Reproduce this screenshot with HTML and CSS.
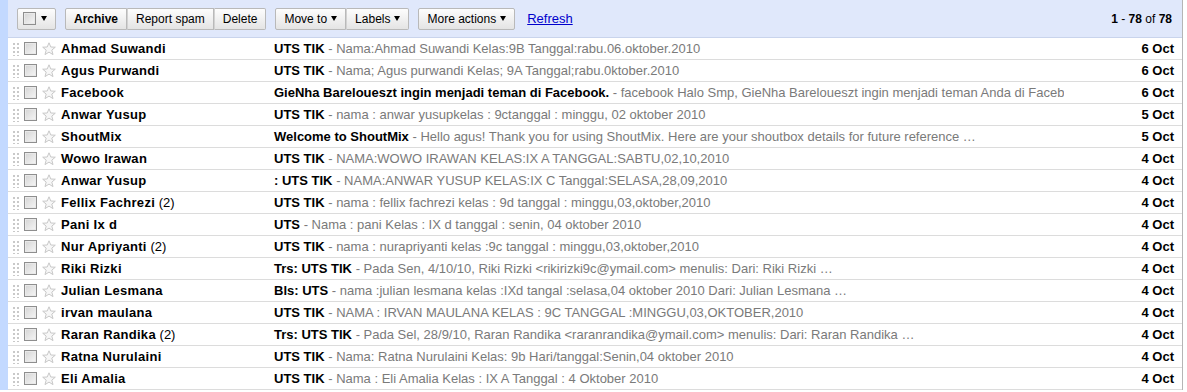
FILE: index.html
```html
<!DOCTYPE html>
<html lang="en">
<head>
    <meta charset="UTF-8">
    <title>Inbox</title>
    <link rel="stylesheet" href="styles.css">
</head>
<body>
    <div class="mailbox">
        <!-- Toolbar -->
        <div class="toolbar">
            <div class="btn select-btn"><span class="cb"></span><span class="arrow"></span></div>
            <div class="group">
                <div class="btn first"><b>Archive</b></div>
                <div class="btn mid">Report spam</div>
                <div class="btn last">Delete</div>
            </div>
            <div class="group">
                <div class="btn first">Move to <span class="arrow"></span></div>
                <div class="btn last">Labels <span class="arrow"></span></div>
            </div>
            <div class="btn">More actions <span class="arrow"></span></div>
            <a class="refresh" href="#refresh">Refresh</a>
            <div class="count"><b>1</b> - <b>78</b> of <b>78</b></div>
        </div>

        <!-- Message list -->
        <div class="list" id="list"></div>
    </div>

    <script>
        const mails = [
            ['Ahmad Suwandi', '', 'UTS TIK', 'Nama:Ahmad Suwandi Kelas:9B Tanggal:rabu.06.oktober.2010', '6 Oct'],
            ['Agus Purwandi', '', 'UTS TIK', 'Nama; Agus purwandi Kelas; 9A Tanggal;rabu.0ktober.2010', '6 Oct'],
            ['Facebook', '', 'GieNha Bareloueszt ingin menjadi teman di Facebook.', 'facebook Halo Smp, GieNha Bareloueszt ingin menjadi teman Anda di Facebook. Kami perlu memastikan', '6 Oct'],
            ['Anwar Yusup', '', 'UTS TIK', 'nama : anwar yusupkelas : 9ctanggal : minggu, 02 oktober 2010', '5 Oct'],
            ['ShoutMix', '', 'Welcome to ShoutMix', 'Hello agus! Thank you for using ShoutMix. Here are your shoutbox details for future reference \u2026', '5 Oct'],
            ['Wowo Irawan', '', 'UTS TIK', 'NAMA:WOWO IRAWAN KELAS:IX A TANGGAL:SABTU,02,10,2010', '4 Oct'],
            ['Anwar Yusup', '', ': UTS TIK', 'NAMA:ANWAR YUSUP KELAS:IX C Tanggal:SELASA,28,09,2010', '4 Oct'],
            ['Fellix Fachrezi', '(2)', 'UTS TIK', 'nama : fellix fachrezi kelas : 9d tanggal : minggu,03,oktober,2010', '4 Oct'],
            ['Pani Ix d', '', 'UTS', 'Nama : pani Kelas : IX d tanggal : senin, 04 oktober 2010', '4 Oct'],
            ['Nur Apriyanti', '(2)', 'UTS TIK', 'nama : nurapriyanti kelas :9c tanggal : minggu,03,oktober,2010', '4 Oct'],
            ['Riki Rizki', '', 'Trs: UTS TIK', 'Pada Sen, 4/10/10, Riki Rizki <rikirizki9c@ymail.com> menulis: Dari: Riki Rizki \u2026', '4 Oct'],
            ['Julian Lesmana', '', 'Bls: UTS', 'nama :julian lesmana kelas :IXd tangal :selasa,04 oktober 2010 Dari: Julian Lesmana \u2026', '4 Oct'],
            ['irvan maulana', '', 'UTS TIK', 'NAMA : IRVAN MAULANA KELAS : 9C TANGGAL :MINGGU,03,OKTOBER,2010', '4 Oct'],
            ['Raran Randika', '(2)', 'Trs: UTS TIK', 'Pada Sel, 28/9/10, Raran Randika <raranrandika@ymail.com> menulis: Dari: Raran Randika \u2026', '4 Oct'],
            ['Ratna Nurulaini', '', 'UTS TIK', 'Nama: Ratna Nurulaini Kelas: 9b Hari/tanggal:Senin,04 oktober 2010', '4 Oct'],
            ['Eli Amalia', '', 'UTS TIK', 'Nama : Eli Amalia Kelas : IX A Tanggal : 4 Oktober 2010', '4 Oct']
        ];

        const esc = s => s.replace(/&/g, '&amp;').replace(/</g, '&lt;').replace(/>/g, '&gt;');

        const star = '<svg width="14" height="14" viewBox="0 0 14 14"><polygon points="7,0.8 8.8,5 13.3,5.2 9.8,8.1 11,12.6 7,10.1 3,12.6 4.2,8.1 0.7,5.2 5.2,5" fill="#f7f7f7" stroke="#c8c8c8" stroke-width="1"/></svg>';

        const list = document.getElementById('list');
        mails.forEach(([from, n, subject, snippet, date]) => {
            list.innerHTML += `
                <div class="row">
                    <span class="grip"></span>
                    <span class="cell-cb"><span class="cb"></span></span>
                    <span class="star">${star}</span>
                    <span class="from"><b>${from}</b>${n ? ' ' + n : ''}</span>
                    <span class="subject"><b>${esc(subject)}</b> <span class="snippet">- ${esc(snippet)}</span></span>
                    <span class="date">${date}</span>
                </div>`;
        });
    </script>
</body>
</html>
```

FILE: styles.css
```css
body {
    margin: 0;
    font-family: "Liberation Sans", Arial, sans-serif;
    background: #fff;
    color: #000;
}

.mailbox {
    width: 1174px;
    border-left: 8px solid #c3d9ff;
    border-right: 1px solid #b5b5b5;
}

/* Toolbar */
.toolbar {
    display: flex;
    align-items: center;
    height: 37px;
    padding: 0 10px 0 9px;
    background: #e0e8fb;
    border-bottom: 1px solid #c9d4ec;
    font-size: 12px;
}

.group {
    display: flex;
    margin-right: 9px;
}

.btn {
    display: flex;
    align-items: center;
    height: 20px;
    padding: 0 8px;
    border: 1px solid #b9b9b9;
    border-radius: 2px;
    background: linear-gradient(#fdfdfd, #e4e4e4);
    color: #000;
    white-space: nowrap;
    margin-right: 9px;
}

.group .btn {
    margin-right: 0;
}

.group .first {
    border-radius: 2px 0 0 2px;
}

.group .mid,
.group .last {
    border-left-color: #d2d2d2;
    border-radius: 0;
}

.group .last {
    border-radius: 0 2px 2px 0;
}

.select-btn {
    padding: 0 8px 0 5px;
    gap: 5px;
}

.arrow {
    display: inline-block;
    width: 0;
    height: 0;
    margin-left: 4px;
    border-left: 3px solid transparent;
    border-right: 3px solid transparent;
    border-top: 5px solid #000;
}

.select-btn .arrow {
    margin-left: 0;
}

.refresh {
    color: #0000cc;
    font-size: 13px;
    margin-left: 3px;
}

.count {
    margin-left: auto;
    font-size: 12px;
}

/* Checkbox */
.cb {
    display: inline-block;
    width: 11px;
    height: 11px;
    border: 1px solid #8e8e8e;
    background: linear-gradient(135deg, #d4d4d4, #f6f6f6);
    box-shadow: inset 0 0 0 1px #e9e9e9;
}

/* Message rows */
.row {
    display: grid;
    grid-template-columns: 14px 18px 18px 212px 794px 1fr;
    align-items: center;
    height: 21px;
    border-bottom: 1px solid #dcdcdc;
    font-size: 13px;
    white-space: nowrap;
}

.grip {
    width: 7px;
    height: 14px;
    margin-left: 5px;
    background-image: radial-gradient(circle, #c9c9c9 1px, transparent 1.2px);
    background-size: 4px 4px;
    background-position: -1px 0;
}

.cell-cb {
    display: flex;
    padding-left: 2px;
}

.star {
    display: flex;
    padding-left: 2px;
}

.from {
    padding-left: 3px;
    overflow: hidden;
}

.from b {
    letter-spacing: 0.3px;
}

.subject {
    padding-left: 4px;
    overflow: hidden;
}

.snippet {
    color: #7a7a7a;
}

.date {
    text-align: right;
    font-weight: bold;
    padding-right: 8px;
}
```
